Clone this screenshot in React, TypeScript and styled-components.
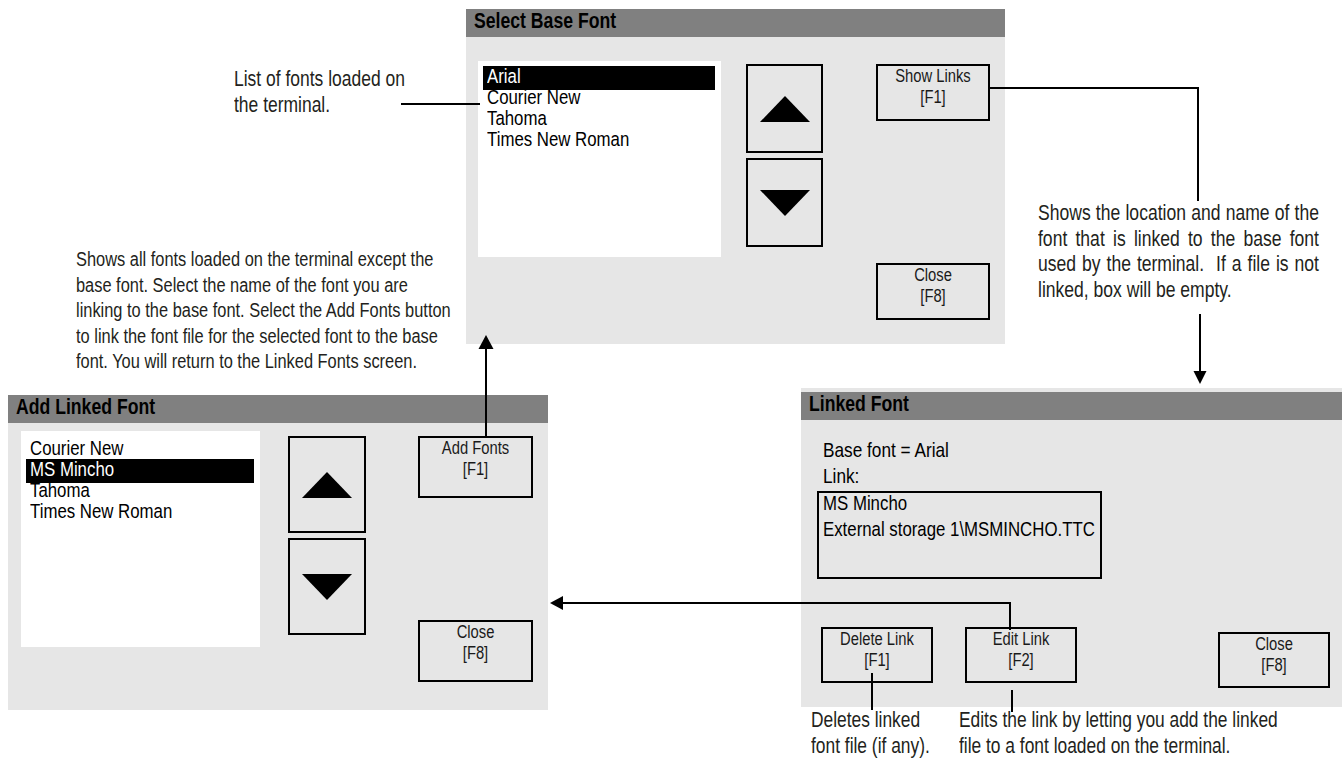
import React from "react";
import styled, { createGlobalStyle, css } from "styled-components";

const FONT = `"Liberation Sans", Arial, sans-serif`;
const SQUEEZE = 0.82;

const GlobalStyle = createGlobalStyle`
  html, body { margin: 0; padding: 0; background: #ffffff; }
  body { font-family: ${FONT}; overflow: hidden; }
  *, *::before, *::after { box-sizing: border-box; }
`;

const Canvas = styled.main`
  position: relative;
  width: 1342px;
  height: 759px;
  overflow: hidden;
  background: #fff;
  color: #000;
  font-family: ${FONT};
`;

/* condensed face: Liberation Sans squeezed to Arial Narrow proportions */
const Narrow = styled.span<{ $origin?: string }>`
  display: inline-block;
  white-space: nowrap;
  transform: scaleX(${SQUEEZE});
  transform-origin: ${(p) => p.$origin ?? "left"} center;
`;

type Pos = { $x: number; $y: number; $w: number; $h: number; $pt?: number };

const Screen = styled.section<Pos>`
  position: absolute;
  left: ${(p) => p.$x}px;
  top: ${(p) => p.$y}px;
  width: ${(p) => p.$w}px;
  height: ${(p) => p.$h}px;
  padding-top: ${(p) => p.$pt ?? 0}px;
  background: #e6e6e6;
  display: flex;
  flex-direction: column;
`;

const TitleBar = styled.h2`
  flex: none;
  margin: 0;
  height: 28px;
  padding-left: 8px;
  background: #808080;
  color: #000;
  font-size: 21.5px;
  font-weight: 700;
  line-height: 25px;
`;

const Body = styled.div<{ $pt: number; $pl: number }>`
  flex: 1;
  display: flex;
  align-items: flex-start;
  padding: ${(p) => p.$pt}px 0 0 ${(p) => p.$pl}px;
`;

const FontList = styled.ul<{ $w: number; $h: number; $pt: number }>`
  position: relative;
  isolation: isolate;
  flex: none;
  width: ${(p) => p.$w}px;
  height: ${(p) => p.$h}px;
  margin: 0;
  padding: ${(p) => p.$pt}px 6px 0 5px;
  list-style: none;
  background: #fff;
  font-size: 20.5px;
  line-height: 21px;
`;

const FontItem = styled.li<{ $selected?: boolean }>`
  position: relative;
  height: 21px;
  padding-left: 4px;
  white-space: nowrap;
  color: ${(p) => (p.$selected ? "#fff" : "#000")};
  ${(p) =>
    p.$selected &&
    css`
      &::before {
        content: "";
        position: absolute;
        z-index: -1;
        left: 0;
        right: 0;
        top: 1px;
        bottom: -4px;
        background: #000;
      }
    `}
`;

const ScrollColumn = styled.div<{ $ml: number; $mt: number }>`
  flex: none;
  display: flex;
  flex-direction: column;
  gap: 5px;
  margin: ${(p) => p.$mt}px 0 0 ${(p) => p.$ml}px;
`;

const ScrollButton = styled.div<{ $w: number; $h: number }>`
  width: ${(p) => p.$w}px;
  height: ${(p) => p.$h}px;
  border: 2px solid #000;
  display: flex;
  align-items: center;
  justify-content: center;
`;

const Arrow = styled.span<{ $down?: boolean }>`
  width: 0;
  height: 0;
  border-left: 25px solid transparent;
  border-right: 25px solid transparent;
  ${(p) =>
    p.$down
      ? css`border-top: 26px solid #000;`
      : css`border-bottom: 26px solid #000;`}
`;

const KeyColumn = styled.div<{ $ml: number; $mt: number; $h: number }>`
  flex: none;
  display: flex;
  flex-direction: column;
  justify-content: space-between;
  height: ${(p) => p.$h}px;
  margin: ${(p) => p.$mt}px 0 0 ${(p) => p.$ml}px;
`;

const KeyButton = styled.div<{ $w: number; $h: number; $ml?: number; $mt?: number }>`
  flex: none;
  width: ${(p) => p.$w}px;
  height: ${(p) => p.$h}px;
  margin: ${(p) => p.$mt ?? 0}px 0 0 ${(p) => p.$ml ?? 0}px;
  border: 2px solid #000;
  font-size: 18px;
  line-height: 20.5px;
  color: #1a1a1a;
`;

const KeyLabel = styled.span`
  display: block;
  text-align: center;
  white-space: nowrap;
  transform: scaleX(${SQUEEZE});
  transform-origin: center center;
`;

const LinkedBody = styled.div`
  display: flex;
  flex-direction: column;
  padding: 17px 0 0 16px;
`;

const InfoLine = styled.p`
  margin: 0 0 0 6px;
  font-size: 21px;
  line-height: 26px;
  white-space: nowrap;
  transform: scaleX(${SQUEEZE});
  transform-origin: left center;
`;

const LinkBox = styled.div`
  width: 285px;
  height: 88px;
  margin-top: 2px;
  border: 2px solid #000;
  padding-left: 4px;
  font-size: 20.5px;
  line-height: 26px;
  white-space: nowrap;
`;

const LinkLines = styled.div`
  margin-top: -3px;
  transform: scaleX(${SQUEEZE});
  transform-origin: left top;
`;

const KeyRow = styled.div`
  display: flex;
  align-items: flex-start;
  margin-top: 48px;
`;

const Note = styled.p<{ $x: number; $y: number; $fs: number; $w?: number }>`
  position: absolute;
  left: ${(p) => p.$x}px;
  top: ${(p) => p.$y}px;
  width: ${(p) => (p.$w ? `${p.$w / SQUEEZE}px` : "auto")};
  margin: 0;
  font-size: ${(p) => p.$fs}px;
  line-height: 25.5px;
  color: #231f20;
  transform: scaleX(${SQUEEZE});
  transform-origin: left top;
`;

const NoteLine = styled.span<{ $justify?: boolean }>`
  display: block;
  white-space: nowrap;
  ${(p) =>
    p.$justify &&
    css`
      white-space: normal;
      text-align: justify;
      text-align-last: justify;
    `}
`;

const Wires = styled.svg`
  position: absolute;
  left: 0;
  top: 0;
  width: 1342px;
  height: 759px;
  pointer-events: none;
`;

const Key = ({ label, fkey }: { label: string; fkey: string }) => (
  <KeyLabel>
    {label}
    <br />
    {fkey}
  </KeyLabel>
);

const Fonts = ({ items, selected }: { items: string[]; selected: string }) => (
  <>
    {items.map((f) => (
      <FontItem key={f} $selected={f === selected}>
        <Narrow>{f}</Narrow>
      </FontItem>
    ))}
  </>
);

export default function App() {
  return (
    <>
      <GlobalStyle />
      <Canvas>
        {/* Select Base Font */}
        <Screen $x={466} $y={9} $w={539} $h={335}>
          <TitleBar>
            <Narrow>Select Base Font</Narrow>
          </TitleBar>
          <Body $pt={24} $pl={12}>
            <FontList $w={243} $h={196} $pt={4}>
              <Fonts
                items={["Arial", "Courier New", "Tahoma", "Times New Roman"]}
                selected="Arial"
              />
            </FontList>
            <ScrollColumn $ml={25} $mt={3}>
              <ScrollButton $w={77} $h={89}>
                <Arrow />
              </ScrollButton>
              <ScrollButton $w={77} $h={89}>
                <Arrow $down />
              </ScrollButton>
            </ScrollColumn>
            <KeyColumn $ml={53} $mt={3} $h={256}>
              <KeyButton $w={114} $h={57}>
                <Key label="Show Links" fkey="[F1]" />
              </KeyButton>
              <KeyButton $w={114} $h={57}>
                <Key label="Close" fkey="[F8]" />
              </KeyButton>
            </KeyColumn>
          </Body>
        </Screen>

        {/* Add Linked Font */}
        <Screen $x={8} $y={395} $w={540} $h={315}>
          <TitleBar>
            <Narrow>Add Linked Font</Narrow>
          </TitleBar>
          <Body $pt={8} $pl={13}>
            <FontList $w={239} $h={216} $pt={6}>
              <Fonts
                items={["Courier New", "MS Mincho", "Tahoma", "Times New Roman"]}
                selected="MS Mincho"
              />
            </FontList>
            <ScrollColumn $ml={28} $mt={5}>
              <ScrollButton $w={78} $h={97}>
                <Arrow />
              </ScrollButton>
              <ScrollButton $w={78} $h={97}>
                <Arrow $down />
              </ScrollButton>
            </ScrollColumn>
            <KeyColumn $ml={52} $mt={5} $h={246}>
              <KeyButton $w={115} $h={62}>
                <Key label="Add Fonts" fkey="[F1]" />
              </KeyButton>
              <KeyButton $w={115} $h={62}>
                <Key label="Close" fkey="[F8]" />
              </KeyButton>
            </KeyColumn>
          </Body>
        </Screen>

        {/* Linked Font */}
        <Screen $x={801} $y={388} $w={541} $h={319} $pt={4}>
          <TitleBar>
            <Narrow>Linked Font</Narrow>
          </TitleBar>
          <LinkedBody>
            <InfoLine>Base font = Arial</InfoLine>
            <InfoLine>Link:</InfoLine>
            <LinkBox>
              <LinkLines>
                MS Mincho
                <br />
                External storage 1\MSMINCHO.TTC
              </LinkLines>
            </LinkBox>
            <KeyRow>
              <KeyButton $w={112} $h={56} $ml={4}>
                <Key label="Delete Link" fkey="[F1]" />
              </KeyButton>
              <KeyButton $w={112} $h={56} $ml={32}>
                <Key label="Edit Link" fkey="[F2]" />
              </KeyButton>
              <KeyButton $w={112} $h={56} $ml={141} $mt={5}>
                <Key label="Close" fkey="[F8]" />
              </KeyButton>
            </KeyRow>
          </LinkedBody>
        </Screen>

        {/* Callout texts */}
        <Note $x={234} $y={67} $fs={21.3}>
          <NoteLine>List of fonts loaded on</NoteLine>
          <NoteLine>the terminal.</NoteLine>
        </Note>

        <Note $x={76} $y={247} $fs={20}>
          <NoteLine>Shows all fonts loaded on the terminal except the</NoteLine>
          <NoteLine>base font. Select the name of the font you are</NoteLine>
          <NoteLine>linking to the base font. Select the Add Fonts button</NoteLine>
          <NoteLine>to link the font file for the selected font to the base</NoteLine>
          <NoteLine>font. You will return to the Linked Fonts screen.</NoteLine>
        </Note>

        <Note $x={1038} $y={201} $w={281} $fs={21.4}>
          <NoteLine $justify>Shows the location and name of the</NoteLine>
          <NoteLine $justify>font that is linked to the base font</NoteLine>
          <NoteLine $justify>used by the terminal.&nbsp; If a file is not</NoteLine>
          <NoteLine>linked, box will be empty.</NoteLine>
        </Note>

        <Note $x={811} $y={707} $fs={21.2}>
          <NoteLine>Deletes linked</NoteLine>
          <NoteLine>font file (if any).</NoteLine>
        </Note>

        <Note $x={959} $y={707} $fs={21.2}>
          <NoteLine>Edits the link by letting you add the linked</NoteLine>
          <NoteLine>file to a font loaded on the terminal.</NoteLine>
        </Note>

        {/* Connector lines and arrows */}
        <Wires viewBox="0 0 1342 759">
          <g stroke="#000" strokeWidth={2} fill="none">
            <path d="M401 104 H480" />
            <path d="M989 88 H1199 M1198 88 V201" />
            <path d="M1200 314 V372" />
            <path d="M486 436 V348" />
            <path d="M1010 630 V603 H562" />
            <path d="M872 673 V710" />
            <path d="M1012 690 V712" />
          </g>
          <g fill="#000">
            <polygon points="1193.5,371 1206.5,371 1200,384" />
            <polygon points="478.5,349 493.5,349 486,335" />
            <polygon points="563,596 563,610 550,603" />
          </g>
        </Wires>
      </Canvas>
    </>
  );
}
